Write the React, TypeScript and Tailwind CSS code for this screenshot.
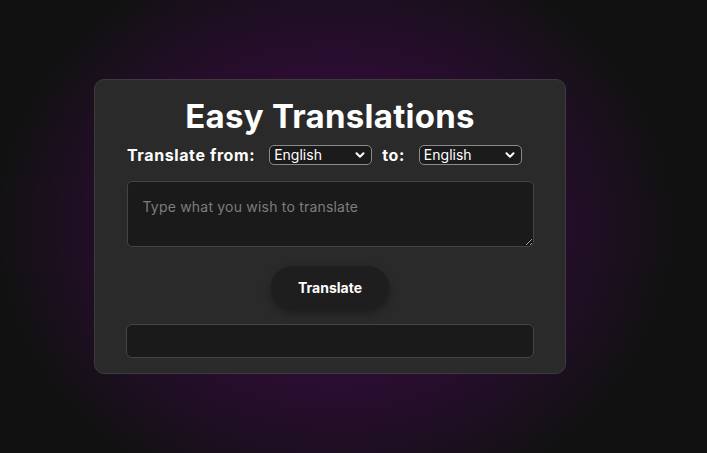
import React from 'react'

const font = { fontFamily: 'Inter, "Noto Sans", sans-serif' }

function Chevron() {
  return (
    <svg width="10" height="10" viewBox="0 0 10 10" className="absolute right-[7px] top-[5px] pointer-events-none">
      <path d="M1.5 3.3 L5 6.8 L8.5 3.3" fill="none" stroke="white" strokeWidth="2" strokeLinecap="round" strokeLinejoin="round" />
    </svg>
  )
}

function LangSelect() {
  return (
    <div className="relative w-[103px] h-[20px]">
      <select
        className="appearance-none block w-full h-full bg-[#1b1b1b] text-white text-[14px] leading-[18px] py-0 border border-[#8a8a8a] rounded-[5px] pl-[4px] pr-5 outline-none"
        style={font}
        defaultValue="English"
      >
        <option>English</option>
        <option>Spanish</option>
        <option>French</option>
      </select>
      <Chevron />
    </div>
  )
}

export default function App() {
  return (
    <div
      className="w-[707px] h-[453px] overflow-hidden pt-[79px] pl-[94px] bg-[radial-gradient(ellipse_340px_290px_at_335px_226px,#300d3a_0%,#2c0c33_50%,#1e0f22_78%,#111111_100%)]"
      style={font}
    >
      <div className="w-[472px] h-[295px] bg-[#2a2a2a] border border-[#3c3c3c] rounded-[10px] px-[32px] flex flex-col items-center">
        <h1 className="text-white font-bold text-[33px] leading-none mt-[20px] tracking-[0.25px]">Easy Translations</h1>
        <div className="w-full flex items-center mt-[12px] h-[20px]">
          <span className="text-white font-bold text-[16px] tracking-[0.6px]">Translate from:</span>
          <div className="ml-[14px]"><LangSelect /></div>
          <span className="text-white font-bold text-[16px] tracking-[0.6px] ml-[10px]">to:</span>
          <div className="ml-[14px]"><LangSelect /></div>
        </div>
        <textarea
          className="mt-[16px] w-[407px] h-[66px] shrink-0 bg-[#1a1a1a] border border-[#444] rounded-[5px] text-white text-[14px] tracking-[0.2px] px-[15px] pt-[14px] placeholder:text-[#7d7d7d] outline-none"
          style={font}
          placeholder="Type what you wish to translate"
        />
        <button
          className="mt-[19px] w-[118px] h-[43px] rounded-full bg-[#1e1e1e] text-white font-bold text-[14px] shadow-[0_4px_8px_rgba(0,0,0,0.35)]"
          style={font}
        >
          Translate
        </button>
        <div className="mt-[15px] w-[408px] h-[34px] bg-[#1a1a1a] border border-[#444] rounded-[6px] self-start -ml-px" />
      </div>
    </div>
  )
}
